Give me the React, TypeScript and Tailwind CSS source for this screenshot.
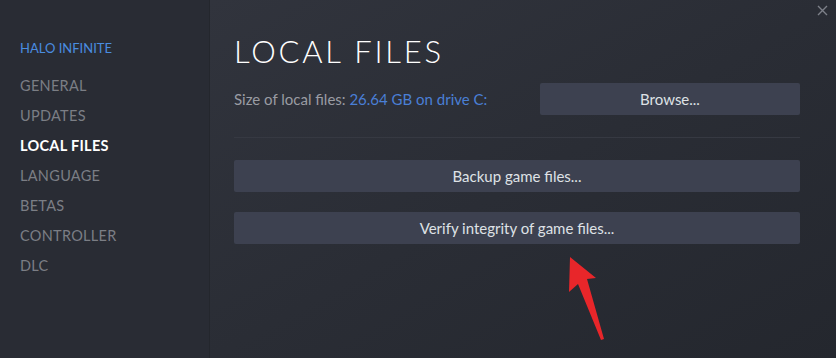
const navItems = [
  { label: "GENERAL", active: false },
  { label: "UPDATES", active: false },
  { label: "LOCAL FILES", active: true },
  { label: "LANGUAGE", active: false },
  { label: "BETAS", active: false },
  { label: "CONTROLLER", active: false },
  { label: "DLC", active: false },
];

const font = { fontFamily: "Lato, 'Open Sans', sans-serif" };

const ActionButton = ({ label, className = "" }: { label: string; className?: string }) => (
  <button
    className={`h-8 bg-[#3d4150] text-[#dfe1e6] text-[15px] rounded-[2px] flex items-center justify-center ${className}`}
  >
    {label}
  </button>
);

export default function App() {
  return (
    <div
      className="relative flex w-[836px] h-[358px] overflow-hidden bg-[#262930]"
      style={font}
    >
      {/* sidebar */}
      <aside className="w-[210px] shrink-0 bg-[#292c34] pl-5 pt-[40px] border-r border-[#24272d]">
        <div className="text-[13px] text-[#4a8de0] leading-4 mb-[22px]">HALO INFINITE</div>
        <nav className="flex flex-col">
          {navItems.map(({ label, active }) => (
            <div
              key={label}
              className={`h-[30px] text-[14.5px] leading-4 tracking-[0.3px] ${
                active ? "text-white font-bold" : "text-[#7b7e85]"
              }`}
            >
              {label}
            </div>
          ))}
        </nav>
      </aside>

      {/* content */}
      <main className="flex-1 bg-gradient-to-br from-[#31343d] via-[#2a2d35] to-[#24272e] pl-6 pr-9 pt-[33px]">
        <h1 className="text-[31px] leading-9 font-light tracking-[2.8px] text-white">LOCAL FILES</h1>
        <div className="mt-[14px] flex items-center">
          <div className="flex-1 text-[15px]">
            <span className="text-[#9a9ca3]">Size of local files: </span>
            <span className="text-[#4a7fd6]">26.64 GB on drive C:</span>
          </div>
          <ActionButton label="Browse..." className="w-[260px]" />
        </div>
        <div className="mt-[22px] h-px bg-[#363942]" />
        <div className="mt-[22px] flex flex-col gap-5">
          <ActionButton label="Backup game files..." className="w-full" />
          <ActionButton label="Verify integrity of game files..." className="w-full" />
        </div>
      </main>

      {/* close */}
      <svg
        className="absolute right-[8px] top-[5px]"
        width="11"
        height="11"
        viewBox="0 0 11 11"
        stroke="#7d8089"
        strokeWidth="1.4"
      >
        <path d="M1 1L10 10M10 1L1 10" />
      </svg>

      {/* annotation arrow */}
      <svg className="absolute left-[560px] top-[250px]" width="50" height="95" viewBox="0 0 50 95">
        <path d="M10 7 L9 42 L18 34 L41 90 L44 89 L27 29 L36 28 Z" fill="#e8262a" />
      </svg>
    </div>
  );
}
